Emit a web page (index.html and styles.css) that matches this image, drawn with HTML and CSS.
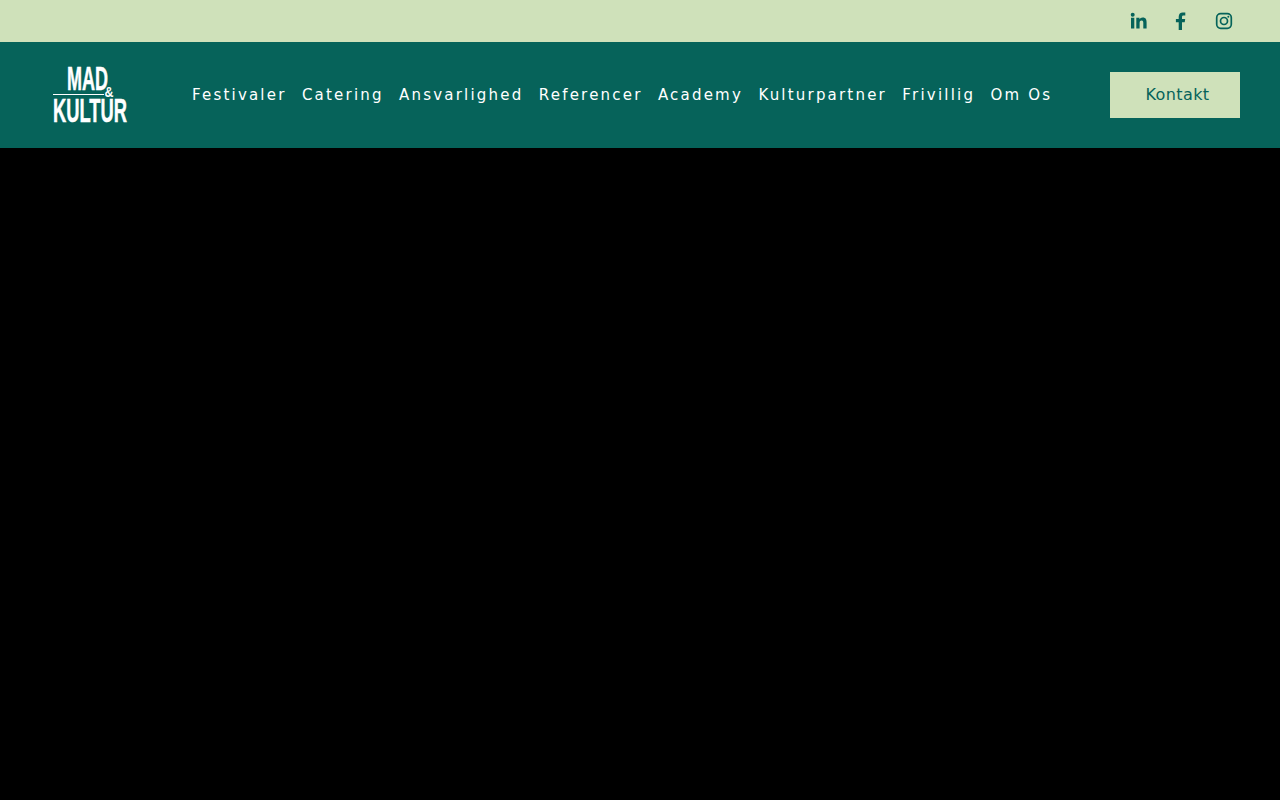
FILE: index.html
```html
<!DOCTYPE html>
<html lang="da">
<head>
<meta charset="utf-8">
<title>Mad & Kultur</title>
<link rel="stylesheet" href="styles.css">
</head>
<body>
<div class="topbar">
  <a class="social" href="#" aria-label="LinkedIn"><svg width="18" height="18" viewBox="0 0 18 18"><path d="M2 5.800h3.300v10.700H2zM3.700 .8a2 2 0 1 1 0 4 2 2 0 0 1 0-4zM7.300 5.800h3.200v1.500c.5-.9 1.600-1.800 3.200-1.800 3.300 0 3.900 2.200 3.900 5v6h-3.300v-5.300c0-1.200 0-2.800-1.700-2.800s-2 1.300-2 2.700v5.400H7.300z"/></svg></a>
  <a class="social" href="#" aria-label="Facebook"><svg width="18" height="18" viewBox="0 0 18 18"><path d="M6.700 18V10.300H3.900V6.900h2.800V4.700C6.700 2 8.300 .5 10.700 .5c1.200 0 2.300 .1 2.600 .1v3h-1.700c-1.300 0-1.600 .7-1.600 1.600v1.700h3.200l-.5 3.400h-2.700V18z"/></svg></a>
  <a class="social" href="#" aria-label="Instagram"><svg width="18" height="18" viewBox="0 0 18 18"><rect x="1.700" y="1.700" width="14.600" height="14.600" rx="4" class="ig"/><circle cx="9" cy="9" r="3.500" class="ig"/><circle cx="13.300" cy="4.700" r="1"/></svg></a>
</div>
<header class="header">
  <a class="logo" href="#" aria-label="Mad & Kultur">
    <svg class="logo-mark" width="76" height="56" viewBox="0 0 76 56">
      <text x="15" y="23" textLength="41" lengthAdjust="spacingAndGlyphs" class="logo-text">MAD</text>
      <rect x="1" y="27" width="51" height="1"/>
      <text x="52.500" y="30" textLength="9" lengthAdjust="spacingAndGlyphs" class="logo-amp">&amp;</text>
      <text x="1" y="55" textLength="74" lengthAdjust="spacingAndGlyphs" class="logo-text">KULTUR</text>
    </svg>
  </a>
  <nav class="nav">
    <a href="#">Festivaler</a>
    <a href="#">Catering</a>
    <a href="#">Ansvarlighed</a>
    <a href="#">Referencer</a>
    <a href="#">Academy</a>
    <a href="#">Kulturpartner</a>
    <a href="#">Frivillig</a>
    <a href="#">Om Os</a>
  </nav>
  <a class="cta" href="#">Kontakt</a>
</header>
<main class="hero"></main>
</body>
</html>
```

FILE: styles.css
```css
* { box-sizing: border-box; }
html, body { margin: 0; height: 100%; }
body {
  display: flex;
  flex-direction: column;
  height: 800px;
  overflow: hidden;
  background: #000;
  font-family: "DejaVu Sans", Inter, sans-serif;
}
a { text-decoration: none; color: inherit; }
.topbar {
  flex: 0 0 42px;
  background: #cfe1ba;
  display: flex;
  justify-content: flex-end;
  align-items: center;
  gap: 25px;
  padding-right: 47px;
}
.social { display: flex; fill: #06635a; }
.ig { fill: none; stroke: #06635a; stroke-width: 1.700; }
.header {
  flex: 0 0 106px;
  background: #06635a;
  display: flex;
  align-items: center;
  padding: 0 40px 0 52px;
  color: #fff;
}
.logo { display: flex; width: 140px; fill: #fff; }
.logo-mark { overflow: visible; }
.logo-text { font-family: "Liberation Sans", sans-serif; font-weight: 700; font-size: 33px; stroke: #fff; stroke-width: .5px; }
.logo-amp { font-family: "Liberation Sans", sans-serif; font-weight: 700; font-size: 14px; }
.nav {
  display: flex;
  gap: 15.400px;
  font-size: 15px;
  letter-spacing: 2.200px;
  white-space: nowrap;
}
.cta {
  margin-left: auto;
  width: 130px;
  height: 46px;
  padding: 0 0 2px 5px;
  display: flex;
  align-items: center;
  justify-content: center;
  background: #cfe1ba;
  color: #06635a;
  font-size: 16px;
  letter-spacing: .4px;
}
.hero { flex: 1; background: #000; }
```
